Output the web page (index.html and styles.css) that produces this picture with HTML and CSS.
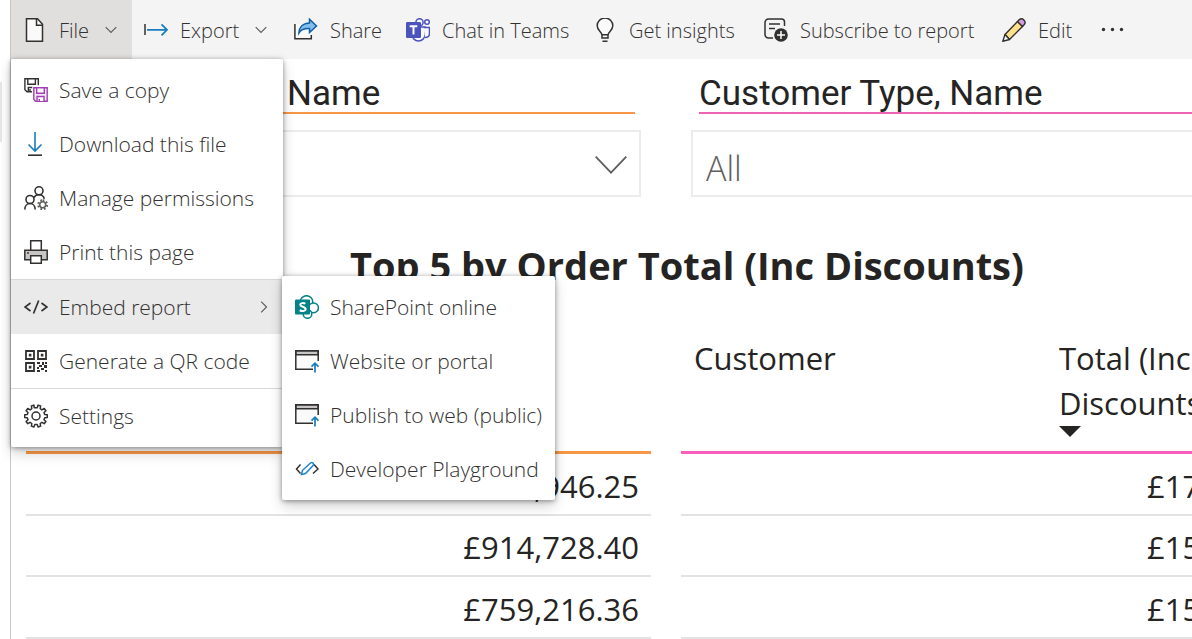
FILE: index.html
```html
<!DOCTYPE html>
<html lang="en">
<head>
<meta charset="utf-8">
<title>Sales report</title>
<link rel="stylesheet" href="styles.css">
</head>
<body>
<div class="gutter"></div>
<div class="app">
  <nav class="toolbar" aria-label="Report actions">
    <div class="menu-anchor">
      <button class="tool tool-active" type="button" aria-expanded="true">
        <svg class="icon" viewBox="0 0 24 24"><path d="M3.500.8h11l5 5.500v17h-16z" fill="#fafafa" stroke="#323130" stroke-width="1.500"/><path d="M13.500.8v6.500h6" fill="none" stroke="#323130" stroke-width="1.500"/></svg>
        <span class="label">File</span>
        <svg class="chevron" viewBox="0 0 12 8"><path d="M.7 1.200 6 6.500l5.300-5.300"/></svg>
      </button>
      <ul class="menu">
        <li><button class="item" type="button">
          <svg class="icon" viewBox="0 0 24 24" fill="none" stroke-width="1.400"><g stroke="#323130"><path d="M8 13.800H3L.9 11.700V.7h13.400v6.500M3.800.7v5.500h7.600V.7M4.300 13.500v-4h4M6 13v-2"/></g><g stroke="#a33fb5"><path fill="#f6e9f8" d="M9.800 9.700h13.400v13.500H11.500l-1.700-1.700z"/><path fill="#fff" d="M12.700 9.700h7.600v5.500h-7.600zM13 23v-4.500h7V23M15.300 23v-2"/></g></svg>
          <span class="label">Save a copy</span></button></li>
        <li><button class="item" type="button">
          <svg class="icon" viewBox="0 0 24 24" fill="none" stroke-width="1.600"><path stroke="#1a7dbd" d="M11 0v19M4.500 12.500l6.500 6.500 6.500-6.500"/><path stroke="#323130" d="M4 23.200h14"/></svg>
          <span class="label">Download this file</span></button></li>
        <li><button class="item" type="button">
          <svg class="icon" viewBox="0 0 24 24" fill="none" stroke="#323130" stroke-width="1.600"><circle cx="15" cy="4.800" r="4"/><circle cx="6" cy="13.500" r="4"/><path d="M.8 23.500c0-3.500 2.300-6 5.200-6s5.200 2.500 5.200 6M10 11.500c1-1.800 2.800-2.700 5-2.700 2.500 0 4.700 1.500 5.300 4"/><g stroke="#605e5c"><circle cx="18.700" cy="18.700" r="3"/><path stroke-dasharray="1.700 1.900" stroke-width="2" d="M18.700 14.200a4.500 4.500 0 1 1 0 9 4.500 4.500 0 0 1 0-9z"/></g></svg>
          <span class="label">Manage permissions</span></button></li>
        <li><button class="item" type="button">
          <svg class="icon" viewBox="0 0 24 24" stroke="#323130" stroke-width="1.500"><path fill="#fff" d="M6.700.8h10.600v10H6.700z"/><path fill="#c8c6c4" d="M.8 10.300h22.400v9.500H.8z"/><path fill="#fff" d="M6.700 15.800h10.600v7.400H6.700z"/><circle cx="4" cy="13" r=".3"/></svg>
          <span class="label">Print this page</span></button></li>
        <li class="ruled sub-anchor"><button class="item item-active" type="button" aria-expanded="true">
          <svg class="icon" viewBox="0 0 24 24" fill="none" stroke="#323130" stroke-width="1.700"><path d="M6.500 8 1 12l5.500 4M17.500 8l5.500 4-5.500 4M14.700 5.500 9.500 18.500"/></svg>
          <span class="label">Embed report</span>
          <svg class="chevron-right" viewBox="0 0 8 12"><path d="M1.200.7 6.500 6l-5.300 5.300"/></svg></button>
          <ul class="menu submenu">
            <li><button class="item" type="button">
              <svg class="icon" viewBox="0 0 24 24" fill="#fff" stroke="#038387" stroke-width="1.500"><circle cx="11.500" cy="7" r="6.300"/><circle cx="18.500" cy="12.800" r="4.900"/><circle cx="12.500" cy="19" r="4.300"/><path fill="#038387" stroke="none" d="M1 4.500h13a1 1 0 0 1 1 1V18.500a1 1 0 0 1-1 1H1a1 1 0 0 1-1-1V5.500a1 1 0 0 1 1-1z"/><path fill="none" stroke="#fff" stroke-width="2" d="M10.300 8.800c-1-.8-5-1.300-5 .9 0 2.400 5.300 1.800 5.300 4.400 0 2.400-4 2.400-5.800 1"/></svg>
              <span class="label">SharePoint online</span></button></li>
            <li><button class="item" type="button">
              <svg class="icon" viewBox="0 0 24 24" fill="none" stroke="#323130" stroke-width="1.500"><path fill="#fafafa" stroke="none" d="M1 2h22v10l-5 8H1z"/><path fill="#c8c6c4" d="M.8 1.800h22.400v4H.8z"/><path d="M23.200 12V1.800H.8v18.400H18"/><path stroke="#1a7dbd" stroke-width="1.700" d="M20 23.500v-9.300M16.500 17.700l3.500-3.500 3.500 3.500"/></svg>
              <span class="label">Website or portal</span></button></li>
            <li><button class="item" type="button">
              <svg class="icon" viewBox="0 0 24 24" fill="none" stroke="#323130" stroke-width="1.500"><path fill="#fafafa" stroke="none" d="M1 2h22v10l-5 8H1z"/><path fill="#c8c6c4" d="M.8 1.800h22.400v4H.8z"/><path d="M23.200 12V1.800H.8v18.400H18"/><path stroke="#1a7dbd" stroke-width="1.700" d="M20 23.500v-9.300M16.500 17.700l3.500-3.500 3.500 3.500"/></svg>
              <span class="label">Publish to web (public)</span></button></li>
            <li><button class="item" type="button">
              <svg class="icon" viewBox="0 0 24 24" fill="none" stroke="#323130" stroke-width="1.500"><path d="M5.500 7.500 1.500 12l4 4.500M19 7.500l4 4.500-5 4.500"/><path stroke="#1a86d0" d="m6.500 17.500 1-4.200 8-7.300c1.800-1.400 4 .8 2.600 2.600l-7.600 8z"/></svg>
              <span class="label">Developer Playground</span></button></li>
          </ul>
        </li>
        <li><button class="item" type="button">
          <svg class="icon" viewBox="0 0 24 24" fill="none" stroke="#323130" stroke-width="1.800"><path d="M2 2h8v8H2zM14 2h8v8h-8zM2 14h8v8H2z"/><path fill="#323130" stroke="none" d="M4.800 4.800h2.600v2.600H4.800zM16.800 4.800h2.600v2.600h-2.600zM4.800 16.800h2.600v2.600H4.800zM13 13h3v2h-3zM18 13h2v3h-2zM21 13h2v2h-2zM15 16h3v2h-3zM20 16h3v3h-3zM13 18h2v2h-2zM17 19h3v2h-3zM13 21h3v2h-3zM21 21h2v2h-2z"/></svg>
          <span class="label">Generate a QR code</span></button></li>
        <li class="ruled"><button class="item" type="button">
          <svg class="icon" viewBox="0 0 24 24" fill="none" stroke="#323130" stroke-width="1.500" stroke-linejoin="round"><circle cx="12" cy="12" r="4"/><path d="m10.200 3.700-.3-2.600L7.400 2l.4 2.700-1.700 1.200L3.800 4.500 2.100 6.700l1.900 1.800-.7 2-2.600.2v2.800l2.600.3.7 1.900-1.900 1.800 1.700 2.200 2.300-1.400 1.700 1.200-.4 2.600 2.500.9.900-2.500h2.400l.9 2.500 2.500-.9-.4-2.600 1.700-1.200 2.300 1.400 1.700-2.200-1.900-1.800.7-1.900 2.600-.3v-2.800l-2.600-.2-.7-2 1.900-1.800-1.700-2.200-2.300 1.400-1.700-1.200.4-2.700-2.500-.9-.9 2.600z"/></svg>
          <span class="label">Settings</span></button></li>
      </ul>
    </div>
    <button class="tool" type="button">
      <svg class="icon" viewBox="0 0 24 24" fill="none"><path stroke="#323130" stroke-width="1.500" d="M1 6v11"/><path stroke="#1a7dbd" stroke-width="1.700" d="M3 11.800h20M17.500 6.300l5.500 5.500-5.500 5.500"/></svg>
      <span class="label">Export</span>
      <svg class="chevron" viewBox="0 0 12 8"><path d="M.7 1.200 6 6.500l5.300-5.300"/></svg>
    </button>
    <button class="tool" type="button">
      <svg class="icon" viewBox="0 0 24 24" stroke-width="1.500"><path fill="#fafafa" stroke="none" d="M2 6h15v14H2z"/><path fill="none" stroke="#323130" d="M.9 6v14.700h16.400V17"/><path fill="#83beec" stroke="#0f5fa6" d="M15.500 1.200 22.500 8l-7 6.500v-4c-5-.3-8.500 1-10.600 4.500C5 9.500 8.500 5.300 15.500 5z"/></svg>
      <span class="label">Share</span>
    </button>
    <button class="tool" type="button">
      <svg class="icon" viewBox="0 0 24 24" fill="#f8f8ff" stroke="#4b53bc" stroke-width="1.500"><path d="M6 9h13v7.500a6.500 6.500 0 0 1-13 0z"/><path d="M17.500 9.500h6v6c0 2.500-1.500 4-4.500 4"/><circle cx="21" cy="4" r="2.300"/><circle cx="13.500" cy="4.300" r="3.600"/><path fill="#4b53bc" stroke="none" d="M1.300 4h12.400A1.300 1.300 0 0 1 15 5.300v13.400a1.300 1.300 0 0 1-1.300 1.300H1.300A1.300 1.300 0 0 1 0 18.700V5.300A1.300 1.300 0 0 1 1.300 4z"/><path fill="none" stroke="#fff" stroke-width="2" d="M3.700 8.300h7.600M7.500 8v8.500"/></svg>
      <span class="label">Chat in Teams</span>
    </button>
    <button class="tool" type="button">
      <svg class="icon" viewBox="0 0 24 24" fill="#fafafa" stroke="#323130" stroke-width="1.500"><path d="M9 20v-3c0-3-4.800-4.500-4.800-9.200a7.800 7.800 0 0 1 15.600 0c0 4.700-4.800 6.200-4.800 9.200v3z"/><path d="M9 16.800h6M9.500 23.200h5"/></svg>
      <span class="label">Get insights</span>
    </button>
    <button class="tool" type="button">
      <svg class="icon" viewBox="0 0 24 24" fill="none" stroke="#323130" stroke-width="1.500"><path d="M20.500 8V4a3 3 0 0 0-3-3h-13A3.500 3.500 0 0 0 1 4.500v12A3.500 3.500 0 0 0 4.500 20H9M5 6h11M5 10.500h6"/><circle cx="17" cy="17" r="6.800" fill="#323130" stroke="none"/><path stroke="#fff" d="M17 13v8M13 17h8"/></svg>
      <span class="label">Subscribe to report</span>
    </button>
    <button class="tool" type="button">
      <svg class="icon" viewBox="0 0 24 24" stroke="#323130" stroke-width="1.400" stroke-linejoin="round"><path fill="#fde08c" d="m3 16.500 12.500-13 5 5L7.500 21.500z"/><path fill="#d59dde" d="m15.500 3.500 1.900-1.900c3-2.500 7.300 1.800 4.900 4.900l-1.800 2z"/><path fill="#fff" d="m3 16.500-2.200 6.800 6.700-1.800z"/></svg>
      <span class="label">Edit</span>
    </button>
    <button class="tool" type="button" aria-label="More options">
      <svg class="icon" viewBox="0 0 24 24" fill="#323130"><circle cx="2.500" cy="11.500" r="1.700"/><circle cx="11.500" cy="11.500" r="1.700"/><circle cx="20.500" cy="11.500" r="1.700"/></svg>
    </button>
  </nav>

  <main class="report">
    <section class="slicers">
      <div class="slicer">
        <label class="slicer-title slicer-title-orange" for="name">Name</label>
        <div class="select-wrap">
          <select id="name" class="select"><option>All</option></select>
          <svg class="select-arrow" viewBox="0 0 32 18"><path d="m.7.7 15.300 16L31.300.7"/></svg>
        </div>
      </div>
      <div class="slicer">
        <label class="slicer-title slicer-title-pink" for="customer">Customer Type, Name</label>
        <div class="select-wrap select-wrap-bleed">
          <select id="customer" class="select"><option>All</option></select>
        </div>
      </div>
    </section>

    <h1 class="title">Top 5 by Order Total (Inc Discounts)</h1>

    <section class="tables">
      <table class="grid grid-orange">
        <thead><tr><th></th><th></th></tr></thead>
        <tbody>
          <tr><td></td><td class="amount">,946.25</td></tr>
          <tr><td></td><td class="amount">£914,728.40</td></tr>
          <tr><td></td><td class="amount">£759,216.36</td></tr>
        </tbody>
      </table>
      <table class="grid grid-pink">
        <thead><tr><th class="wide">Customer</th><th>Total (Inc<br>Discounts<svg class="sort" viewBox="0 0 22 11"><path d="M0 0h22L11 11z"/></svg></th></tr></thead>
        <tbody>
          <tr><td></td><td class="cut">£17</td></tr>
          <tr><td></td><td class="cut">£15</td></tr>
          <tr><td></td><td class="cut">£15</td></tr>
        </tbody>
      </table>
    </section>
  </main>
</div>
</body>
</html>
```

FILE: styles.css
```css
* { box-sizing: border-box; }

body {
  margin: 0;
  height: 100vh;
  display: grid;
  grid-template-columns: 10px minmax(0, 1fr);
  overflow: hidden;
  background: #fff;
  color: #252423;
  font-family: "Open Sans", "Noto Sans", sans-serif;
}

button, select { font: inherit; color: inherit; }

ul { list-style: none; margin: 0; padding: 0; }

.gutter {
  width: 2px;
  height: 60px;
  margin-top: 82px;
  background: #e6e6e6;
}

.app {
  min-width: 0;
  border-left: 1px solid #c8c6c4;
  overflow: clip;
  overflow-clip-margin: 10px;
}

/* Toolbar */
.toolbar {
  display: grid;
  grid-template-columns: 121px 150px 112px 187px 171px 238px 99px 48px;
  height: 59px;
  background: #f4f4f4;
}

.tool, .item {
  display: flex;
  align-items: center;
  gap: 12px;
  width: 100%;
  border: 0;
  background: none;
  font-weight: 300;
  line-height: 28px;
  color: #323130;
  white-space: nowrap;
  text-align: left;
}

.tool { height: 59px; padding: 0 15px 0 12px; font-size: 20px; }
.tool .label { padding-top: 2px; }
.tool-active { background: #e1dfdd; }

.icon { flex: none; width: 24px; height: 24px; }

.chevron { flex: none; width: 12px; height: 8px; margin-left: auto; }
.chevron-right { flex: none; width: 8px; height: 12px; margin-left: auto; }
.chevron path, .chevron-right path { fill: none; stroke: #605e5c; stroke-width: 1.2; }

/* Menus */
.menu-anchor, .sub-anchor { position: relative; }

.menu {
  position: absolute;
  z-index: 2;
  top: 100%;
  left: 0;
  width: 272px;
  padding: 4px 0;
  background: #fff;
  border-radius: 2px;
  box-shadow: 0 6px 14px rgba(0, 0, 0, .18), 0 1px 5px rgba(0, 0, 0, .4);
}

.submenu { top: -4px; left: 271px; width: 273px; }
.ruled { border-top: 1px solid #d8d8d8; }
.item { height: 54px; padding: 0 15px 0 13px; font-size: 21px; }
.item-active { background: #eaeaea; }
.menu .icon + .label { margin-left: -1px; }

/* Slicers */
.report { padding: 13px 0 0 8px; }

.slicers {
  display: grid;
  grid-template-columns: 622px minmax(0, 1fr);
  gap: 50px;
}

.slicer-title {
  display: block;
  margin-left: 8px;
  padding-top: 4px;
  font-family: Roboto, sans-serif;
  font-size: 35px;
  font-weight: 400;
  line-height: 36px;
  white-space: nowrap;
}

.slicer-title-orange {
  margin-right: 6px;
  padding-left: 260px;
  border-bottom: 2px solid #f79646;
}

.slicer-title-pink { border-bottom: 2px solid #f062b8; }

.select-wrap { display: grid; align-items: center; margin-top: 16px; }

.select {
  grid-area: 1 / 1;
  appearance: none;
  height: 67px;
  padding: 8px 13px 0;
  border: 2px solid #ececec;
  border-radius: 0;
  background: #fff;
  color: #605e5c;
  font-size: 34px;
  font-weight: 300;
}

.select-wrap-bleed .select { border-right: 0; }

.select-arrow {
  grid-area: 1 / 1;
  justify-self: end;
  width: 32px;
  height: 18px;
  margin: 3px 14px 0 0;
  pointer-events: none;
}

.select-arrow path { fill: none; stroke: #605e5c; stroke-width: 1.8; }

/* Tables */
.title {
  margin: 43px 0 0 331px;
  font-size: 38px;
  font-weight: 700;
  line-height: 50px;
  white-space: nowrap;
}

.tables {
  display: grid;
  grid-template-columns: 625px 679px;
  gap: 30px;
  margin: 42px 0 0 7px;
}

.grid {
  width: 100%;
  table-layout: fixed;
  border-collapse: separate;
  border-spacing: 0;
  font-size: 31px;
}

.grid th {
  height: 122px;
  padding: 4px 13px 0;
  font-weight: 400;
  line-height: 45px;
  text-align: left;
  vertical-align: top;
}

.wide { width: 365px; }
.grid-orange th { border-bottom: 3px solid #f79646; }
.grid-pink th { border-bottom: 3px solid #f75fb8; }

.grid td {
  height: 61px;
  padding: 4px 12px 0;
  border-bottom: 2px solid #e3e3e3;
  line-height: 45px;
}

.grid tr:nth-child(odd) td { height: 62px; }

.amount { text-align: right; }
.grid .cut { padding-left: 101px; }

.sort { display: block; width: 22px; height: 11px; fill: #252423; }
```
